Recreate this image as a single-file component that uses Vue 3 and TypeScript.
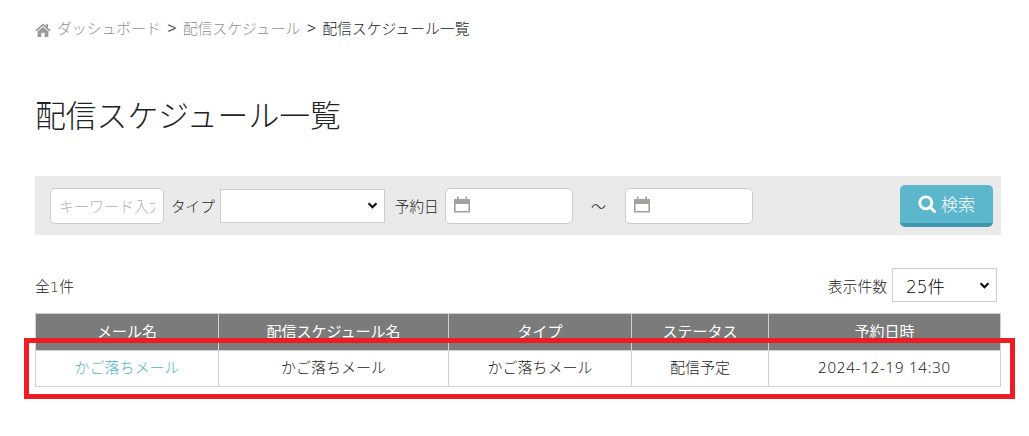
<script setup lang="ts">
interface Column { label: string; width: number; value: string; kind?: string }
const columns: Column[] = [
  { label: 'メール名', width: 183, value: 'かご落ちメール', kind: 'link' },
  { label: '配信スケジュール名', width: 230, value: 'かご落ちメール' },
  { label: 'タイプ', width: 183, value: 'かご落ちメール' },
  { label: 'ステータス', width: 137, value: '配信予定' },
  { label: '予約日時', width: 232, value: '2024-12-19 14:30', kind: 'stamp' },
]
</script>

<template>
  <div class="page">
    <nav class="crumbs">
      <svg class="home" viewBox="0 0 16 14" width="16" height="14" aria-hidden="true">
        <path d="M8 0.5 L0.3 7.2 L1.4 8.4 L8 2.8 L14.6 8.4 L15.7 7.2 L13 4.9 V1.2 H11 V3.1 Z" fill="#999" />
        <path d="M8 4 L2.6 8.6 V14 H6.3 V9.8 H9.7 V14 H13.4 V8.6 Z" fill="#999" />
      </svg>
      <a class="crumb-link">ダッシュボード</a>
      <span class="sep">&gt;</span>
      <a class="crumb-link">配信スケジュール</a>
      <span class="sep">&gt;</span>
      <span class="current">配信スケジュール一覧</span>
    </nav>

    <h1 class="title">配信スケジュール一覧</h1>

    <form class="filter" @submit.prevent>
      <div class="field keyword"><input type="text" placeholder="キーワード入力" /></div>
      <label class="lab lab-type">タイプ</label>
      <div class="select type-select">
        <svg class="chev" viewBox="0 0 12 8" width="11" height="7"><path d="M1.5 1.5 L6 6 L10.5 1.5" fill="none" stroke="#111" stroke-width="2.6" /></svg>
      </div>
      <label class="lab lab-date">予約日</label>
      <div class="field date">
        <svg class="cal" viewBox="0 0 16 17" width="16" height="17" aria-hidden="true">
          <path d="M0 3 H3 V0.5 H4.6 V3 H11.4 V0.5 H13 V3 H16 V16.5 H0 Z M1.6 8 V15 H14.4 V8 Z" fill="#a5a09a" fill-rule="evenodd" />
        </svg>
      </div>
      <span class="tilde">～</span>
      <div class="field date">
        <svg class="cal" viewBox="0 0 16 17" width="16" height="17" aria-hidden="true">
          <path d="M0 3 H3 V0.5 H4.6 V3 H11.4 V0.5 H13 V3 H16 V16.5 H0 Z M1.6 8 V15 H14.4 V8 Z" fill="#a5a09a" fill-rule="evenodd" />
        </svg>
      </div>
      <button class="search" type="submit">
        <svg class="glass" viewBox="0 0 18 18" width="18" height="18" aria-hidden="true">
          <circle cx="7.8" cy="7.8" r="6" fill="none" stroke="#fff" stroke-width="2.8" />
          <path d="M12 12 L16.5 16.5" stroke="#fff" stroke-width="3" stroke-linecap="round" />
        </svg>
        <span>検索</span>
      </button>
    </form>

    <div class="meta">
      <span class="count">全1件</span>
      <div class="per-page">
        <span class="per-label">表示件数</span>
        <div class="select size-select">
          <span>25件</span>
          <svg class="chev" viewBox="0 0 12 8" width="11" height="7"><path d="M1.5 1.5 L6 6 L10.5 1.5" fill="none" stroke="#111" stroke-width="2.6" /></svg>
        </div>
      </div>
    </div>

    <table class="list">
      <colgroup>
        <col v-for="c in columns" :key="c.label" :style="{ width: c.width + 'px' }" />
      </colgroup>
      <thead>
        <tr><th v-for="c in columns" :key="c.label">{{ c.label }}</th></tr>
      </thead>
      <tbody>
        <tr>
          <td v-for="c in columns" :key="c.label" :class="c.kind">{{ c.value }}</td>
        </tr>
      </tbody>
    </table>

    <div class="highlight"></div>
  </div>
</template>

<style>
html, body { margin: 0; background: #fff; }
</style>

<style scoped>
.page {
  position: relative;
  width: 1029px;
  height: 436px;
  box-sizing: border-box;
  padding: 17px 28px 0 35px;
  overflow: hidden;
  color: #222;
  font-family: "DejaVu Sans", "Noto Sans CJK JP", sans-serif;
  font-size: 15px;
  font-weight: 300;
}
.crumbs {
  display: flex;
  align-items: center;
  height: 22px;
  font-family: "Noto Sans CJK JP", sans-serif;
  font-size: 14.85px;
  white-space: nowrap;
  line-height: 22px;
}
.home { margin: 3px 6px 0 0; }
.crumb-link { color: #909090; }
.sep { margin: 0 6.5px; font-family: "Liberation Sans", sans-serif; font-size: 15px; color: #444; }
.current { color: #222; }
.title {
  margin: 53px 0 0;
  height: 44px;
  font-family: "Noto Sans CJK JP", sans-serif;
  font-size: 30.8px;
  line-height: 44px;
  font-weight: 300;
  color: #222;
}
.filter {
  display: flex;
  align-items: center;
  height: 59px;
  margin-top: 40px;
  padding: 0 8px 0 15px;
  background: #eaeaea;
  font-family: "Noto Sans CJK JP", sans-serif;
}
.field {
  box-sizing: border-box;
  height: 36px;
  border: 1px solid #ccc;
  border-radius: 5px;
  background: #fff;
}
.keyword {
  width: 114px;
  padding: 0 8px;
}
.keyword input {
  display: block;
  width: 100%;
  height: 100%;
  box-sizing: border-box;
  padding: 0;
  border: 0;
  background: transparent;
  font: inherit;
  outline: none;
}
.keyword input::placeholder { color: #b0b0b0; }
.lab { font-size: 14.6px; white-space: nowrap; }
.lab-type { margin-left: 7px; }
.lab-date { margin-left: 10px; }
.select {
  display: flex;
  align-items: center;
  justify-content: flex-end;
  box-sizing: border-box;
  border: 1px solid #ccc;
  background: #fff;
}
.type-select {
  width: 165px;
  height: 34px;
  margin-left: 5px;
  padding-right: 6px;
}
.date {
  display: flex;
  align-items: center;
  width: 128px;
  padding-left: 8px;
}
.cal { margin-top: -2px; }
.lab-date + .date { margin-left: 6px; }
.tilde {
  width: 52px;
  text-align: center;
  font-size: 15px;
}
.search {
  display: flex;
  align-items: center;
  justify-content: center;
  gap: 5px;
  box-sizing: border-box;
  width: 93px;
  height: 42px;
  margin: 1px 0 0 auto;
  padding: 0 0 2px;
  border: 0;
  border-bottom: 4px solid #3f98ae;
  border-radius: 5px;
  background: #5cb6cc;
  color: #fff;
  font: inherit;
  font-size: 17px;
}
.glass { margin-top: 2px; }
.meta {
  display: flex;
  align-items: center;
  justify-content: space-between;
  height: 34px;
  margin-top: 33px;
  padding-right: 4px;
}
.count { font-size: 14.8px; }
.per-page { display: flex; align-items: center; gap: 5px; }
.per-label { font-size: 14.8px; }
.size-select {
  justify-content: space-between;
  width: 105px;
  height: 34px;
  padding: 0 6px 0 13px;
  color: #000;
  font-size: 17px;
}
.list {
  width: 966px;
  margin-top: 11px;
  border-collapse: collapse;
  table-layout: fixed;
  font-family: "Noto Sans CJK JP", sans-serif;
}
.list th,
.list td {
  box-sizing: border-box;
  border: 1px solid #d2d2d2;
  padding: 0 0 3px;
  text-align: center;
  font-weight: 300;
  line-height: 20px;
  white-space: nowrap;
}
.list th {
  height: 37px;
  background: #7b7b7b;
  color: #fff;
  font-weight: 400;
}
.list td { height: 36px; }
.list td.link { color: #4fb2ca; }
.list td.stamp {
  font-family: "Noto Sans", sans-serif;
  font-size: 15px;
  font-weight: 300;
  letter-spacing: 0.8px;
  color: #222;
}
.highlight {
  position: absolute;
  left: 24px;
  top: 338px;
  width: 991px;
  height: 61px;
  box-sizing: border-box;
  border: 5px solid #ee1c25;
  pointer-events: none;
}
</style>
